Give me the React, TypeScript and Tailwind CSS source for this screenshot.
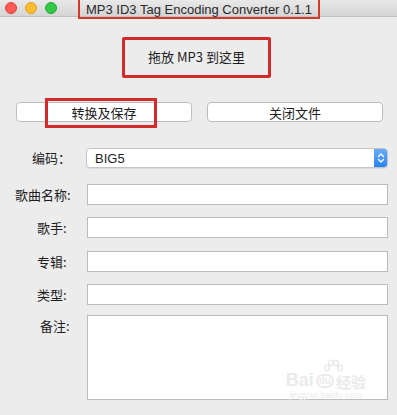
import React from "react";

const font = { fontFamily: '"Noto Sans CJK SC", "Liberation Sans", sans-serif' };
const latin = { fontFamily: '"Liberation Sans", "Noto Sans CJK SC", sans-serif' };

function Label({ children, className }: { children: React.ReactNode; className: string }) {
  return (
    <div className={"w-[72px] shrink-0 text-left text-[13px] leading-[20px] text-[#1e1e1e] whitespace-nowrap " + className}>
      {children}
    </div>
  );
}

export default function App() {
  return (
    <div
      className="w-[397px] h-[415px] overflow-hidden bg-[#ececec] flex flex-col"
      style={font}
    >
      {/* title bar */}
      <div className="relative h-[17px] shrink-0 bg-gradient-to-b from-[#e9e9e9] to-[#d5d5d5] border-b border-[#c2c2c2] flex items-center">
        <div className="flex items-center gap-[8px] pl-[5px]">
          <span className="w-[12px] h-[12px] rounded-full bg-[#fc5b57] border border-[#e0443e]" />
          <span className="w-[12px] h-[12px] rounded-full bg-[#fdbc2e] border border-[#dea123]" />
          <span className="w-[12px] h-[12px] rounded-full bg-[#34c84a] border border-[#24a93a]" />
        </div>
        <div className="absolute left-[78px] top-[-3px] w-[242px] h-[22px] border-2 border-[#d23a2c] flex items-center justify-center pt-[3px]">
          <span className="text-[13px] text-[#2a2a2a] leading-none" style={latin}>
            MP3 ID3 Tag Encoding Converter 0.1.1
          </span>
        </div>
      </div>

      {/* drop zone */}
      <div className="flex justify-center mt-[20px] pr-[4px]">
        <div className="w-[149px] h-[41px] border-[3px] border-[#d42a2a] rounded-[2px] flex items-center justify-center pb-[3px]">
          <span className="text-[13px] leading-none text-[#1e1e1e]">拖放 MP3 到这里</span>
        </div>
      </div>

      {/* buttons */}
      <div className="flex mt-[24px] pl-[16px] gap-[15px]">
        <div className="relative w-[176px] h-[20px] bg-white border border-[#bdbdbd] rounded-[4px] flex items-center justify-center">
          <span className="text-[13px] text-[#1e1e1e] leading-none">转换及保存</span>
          <div className="absolute left-[28px] top-[-5px] w-[112px] h-[30px] border-[3px] border-[#d42a2a]" />
        </div>
        <div className="w-[176px] h-[20px] bg-white border border-[#bdbdbd] rounded-[4px] flex items-center justify-center">
          <span className="text-[13px] text-[#1e1e1e] leading-none">关闭文件</span>
        </div>
      </div>

      {/* form */}
      <div className="flex flex-col mt-[26px] pr-[9px]">
        <div className="flex items-center">
          <Label className="pl-[32px]">编码：</Label>
          <div className="ml-[14px] flex-1 h-[20px] bg-white border border-[#c4c4c4] rounded-[4px] flex items-center justify-between overflow-hidden shadow-[0_1px_0_rgba(0,0,0,0.06)]">
            <span className="pl-[8px] text-[13px] text-[#1e1e1e] leading-none" style={latin}>BIG5</span>
            <div className="w-[14px] h-[20px] -mr-px bg-gradient-to-b from-[#6bb0fa] to-[#1d7ef4] rounded-r-[4px] flex items-center justify-center">
              <svg width="8" height="12" viewBox="0 0 8 12" fill="none" stroke="white" strokeWidth="1.4" strokeLinecap="round" strokeLinejoin="round">
                <path d="M1.5 4.5 L4 2 L6.5 4.5" />
                <path d="M1.5 7.5 L4 10 L6.5 7.5" />
              </svg>
            </div>
          </div>
        </div>

        <div className="flex items-center mt-[16px]">
          <Label className="pl-[15px]">歌曲名称:</Label>
          <div className="ml-[15px] flex-1 h-[21px] bg-white border border-[#bcbcbc]" />
        </div>
        <div className="flex items-center mt-[12px]">
          <Label className="pl-[37px]">歌手:</Label>
          <div className="ml-[15px] flex-1 h-[21px] bg-white border border-[#bcbcbc]" />
        </div>
        <div className="flex items-center mt-[13px]">
          <Label className="pl-[37px]">专辑:</Label>
          <div className="ml-[15px] flex-1 h-[21px] bg-white border border-[#bcbcbc]" />
        </div>
        <div className="flex items-center mt-[12px]">
          <Label className="pl-[37px]">类型:</Label>
          <div className="ml-[15px] flex-1 h-[21px] bg-white border border-[#bcbcbc]" />
        </div>
        <div className="flex items-start mt-[10px]">
          <Label className="pl-[40px]">
            <span className="block mt-[1px]">备注:</span>
          </Label>
          <div className="relative ml-[15px] flex-1 h-[85px] bg-white border border-[#bcbcbc]">
            <div className="absolute right-[21px] bottom-[-1px] flex flex-col items-center text-[#ebebeb]">
              <svg width="22" height="14" viewBox="0 0 22 14" fill="none" stroke="#e8e8e8" strokeWidth="1.3" className="ml-[14px] -mb-[2px]">
                <ellipse cx="5" cy="9" rx="2.2" ry="2.8" />
                <ellipse cx="9" cy="4" rx="2.2" ry="2.8" />
                <ellipse cx="14" cy="4" rx="2.2" ry="2.8" />
                <ellipse cx="18" cy="9" rx="2.2" ry="2.8" />
              </svg>
              <div className="flex items-end gap-[2px] leading-none">
                <span className="text-[18px] font-bold" style={latin}>Bai</span>
                <span className="text-[10px] font-bold rounded-full border-2 border-[#ebebeb] px-[1px] mb-[1px]" style={latin}>du</span>
                <span className="text-[15px] font-bold">经验</span>
              </div>
              <span className="text-[9px] leading-none mt-[2px]" style={latin}>jingyan.baidu.com</span>
            </div>
          </div>
        </div>
      </div>
    </div>
  );
}
